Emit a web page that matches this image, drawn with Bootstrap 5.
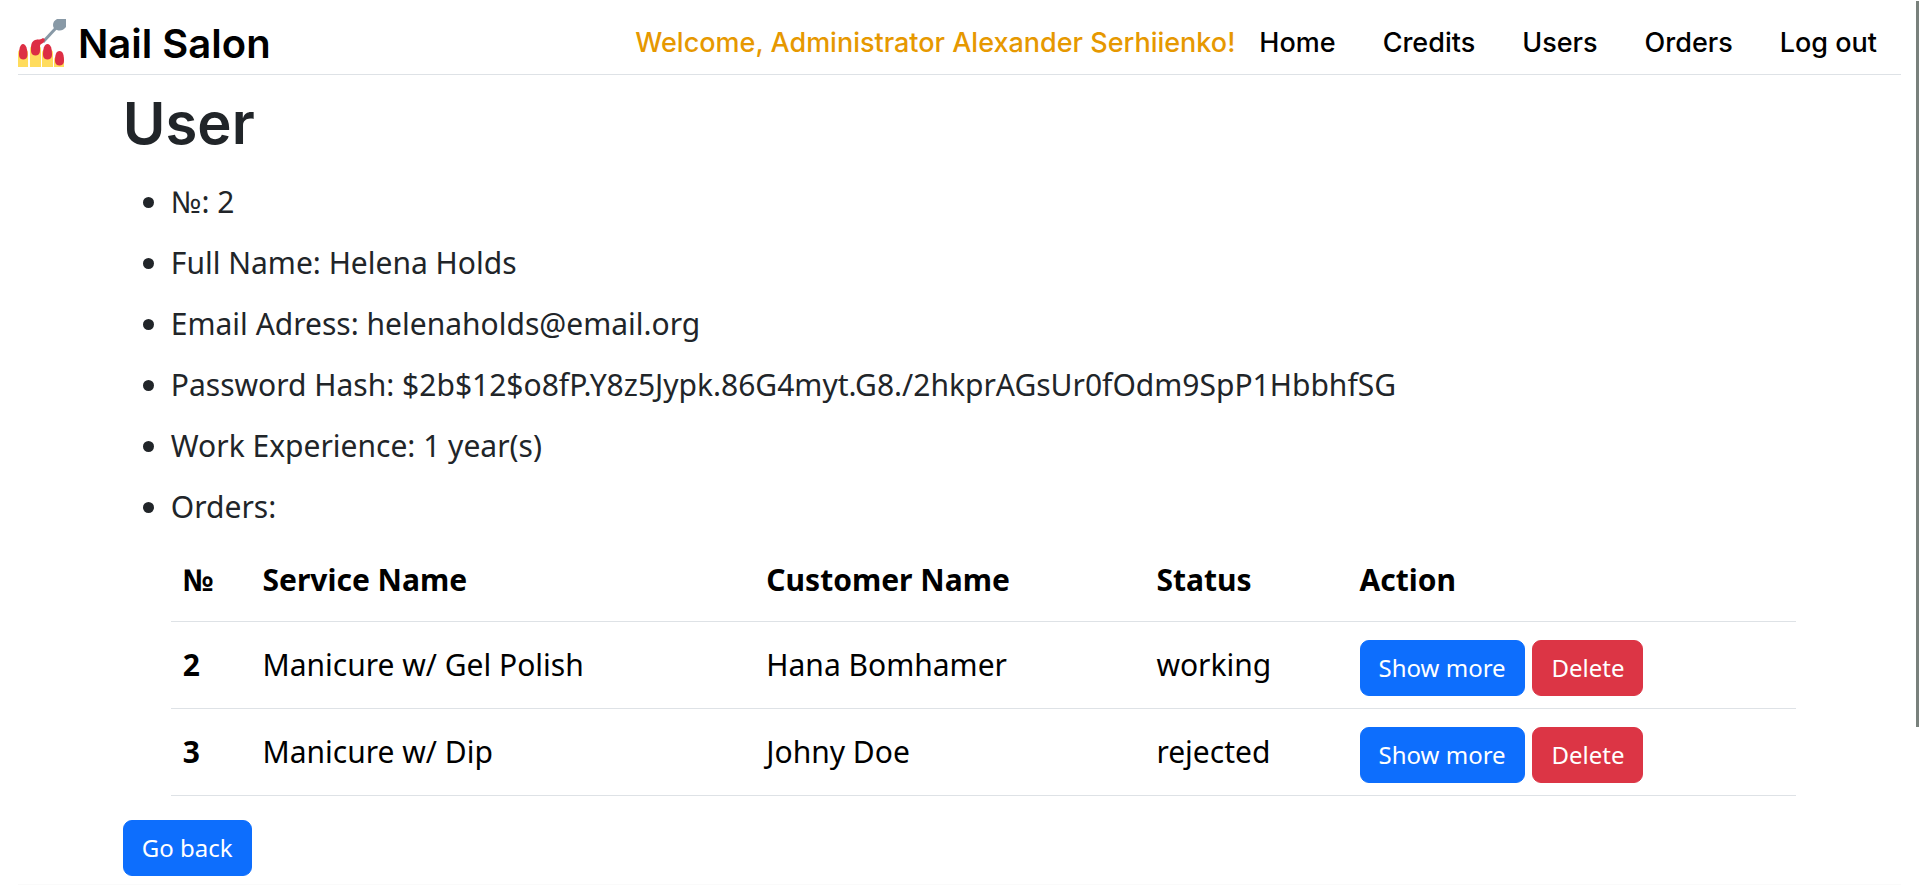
<!DOCTYPE html>
<html lang="en">
<head>
<meta charset="utf-8">
<meta name="viewport" content="width=device-width, initial-scale=1">
<title>Nail Salon – User</title>
<link href="https://cdn.jsdelivr.net/npm/bootstrap@5.3.0/dist/css/bootstrap.min.css" rel="stylesheet">
<style>
html { scrollbar-width: none; }
body { font-family: "Noto Sans", sans-serif; font-size: 30px; line-height: 45px; }
.site-header { margin: 0 18px; padding: 19px 24px 7px 0; border-bottom: 1px solid #dee2e6; }
.site-brand { gap: 12px; }
.site-logo { width: 48px; height: 48px; }
.site-name { font-family: Inter, sans-serif; font-weight: 600; font-size: 40px; color: #000; }
.site-nav { font-family: Inter, sans-serif; font-weight: 500; font-size: 27px; padding-bottom: 2px; }
.site-nav a { color: #000; }
.welcome { color: #e69800; }
.nav-links { gap: 47px; }
.page { padding: 0 6.4%; }
.page h1 { font-family: Inter, sans-serif; font-weight: 600; font-size: 58px; line-height: 72px; margin: 12px 0 20px; }
.details { padding-left: 48px; margin: 0; }
.details li { margin-bottom: 16px; }
.orders { table-layout: fixed; --bs-table-color: #000; color: #000; margin: 11px 0 24px; }
.orders > :not(caption) > * > * { padding: 17px 12px 19px; }
.orders > tbody > tr > .order-actions { padding-top: 18px; padding-bottom: 12px; }
.page .btn { font-size: 24px; line-height: 36px; padding: 9px 18px; border-radius: 9px; }
.site-footer { margin: 8px 18px 0; border-top: 1px solid #fafafa; }
.page-thumb { position: fixed; top: 1px; right: 0; width: 3px; height: 82%; background: #79817c; }
</style>
</head>
<body>
<header class="site-header d-flex align-items-center justify-content-between">
  <a href="#" class="site-brand d-flex align-items-center text-decoration-none">
    <svg class="site-logo" viewBox="0 0 48 48" aria-hidden="true">
      <g fill="#ffdc5d"><path d="M0 48V34q0-4 5-4t5 4v14z"/><path d="M12 48V30q0-4 5.500-4t5.500 4v18z"/><path d="M24 48V34q0-4 5.500-4t5.500 4v14z"/><path d="M36 48V41q0-4 5-4t5 4v7z"/></g>
      <path d="M25 23 38 9" stroke="#8899a6" stroke-width="3"/>
      <path d="M48 0H39q-4 2-4 6 0 4 4 5 5 2 9-3z" fill="#8899a6"/>
      <g fill="#dd2e44">
        <path d="M1 36c0-6 1-11 4-11s4.500 5 4.500 11c0 6-8.500 6-8.500 0z"/>
        <path d="M13 32c0-6 0-9 4-11 3-1 6 0 8-2q3 1 1 4c-2 2-4 2-4 4v5c0 6-9 6-9 0z"/>
        <path d="M25 36c0-6 1-11 4.500-11s4.500 5 4.500 11c0 6-9 6-9 0z"/>
        <path d="M37 42c0-6 1-10 4.500-10s4.500 4 4.500 10c0 6-9 6-9 0z"/>
      </g>
    </svg>
    <span class="site-name">Nail Salon</span>
  </a>
  <nav class="site-nav d-flex align-items-center gap-4">
    <span class="welcome">Welcome, Administrator Alexander Serhiienko!</span>
    <div class="nav-links d-flex">
      <a href="#" class="text-decoration-none">Home</a>
      <a href="#" class="text-decoration-none">Credits</a>
      <a href="#" class="text-decoration-none">Users</a>
      <a href="#" class="text-decoration-none">Orders</a>
      <a href="#" class="text-decoration-none">Log out</a>
    </div>
  </nav>
</header>
<main class="page">
  <h1>User</h1>
  <ul class="details">
    <li>№: 2</li>
    <li>Full Name: Helena Holds</li>
    <li>Email Adress: helenaholds@email.org</li>
    <li>Password Hash: $2b$12$o8fP.Y8z5Jypk.86G4myt.G8./2hkprAGsUr0fOdm9SpP1HbbhfSG</li>
    <li>Work Experience: 1 year(s)</li>
    <li>Orders:
      <table class="table orders align-middle">
        <colgroup><col style="width:4.9%"><col style="width:31%"><col style="width:24%"><col style="width:12.5%"><col></colgroup>
        <thead><tr><th scope="col">№</th><th scope="col">Service Name</th><th scope="col">Customer Name</th><th scope="col">Status</th><th scope="col">Action</th></tr></thead>
        <tbody>
          <tr><th scope="row">2</th><td>Manicure w/ Gel Polish</td><td>Hana Bomhamer</td><td>working</td><td class="order-actions"><button type="button" class="btn btn-primary">Show more</button> <button type="button" class="btn btn-danger">Delete</button></td></tr>
          <tr><th scope="row">3</th><td>Manicure w/ Dip</td><td>Johny Doe</td><td>rejected</td><td class="order-actions"><button type="button" class="btn btn-primary">Show more</button> <button type="button" class="btn btn-danger">Delete</button></td></tr>
        </tbody>
      </table>
    </li>
  </ul>
  <button type="button" class="btn btn-primary d-block">Go back</button>
</main>
<footer class="site-footer"></footer>
<div class="page-thumb"></div>
<script src="https://cdn.jsdelivr.net/npm/bootstrap@5.3.0/dist/js/bootstrap.bundle.min.js"></script>
</body>
</html>
